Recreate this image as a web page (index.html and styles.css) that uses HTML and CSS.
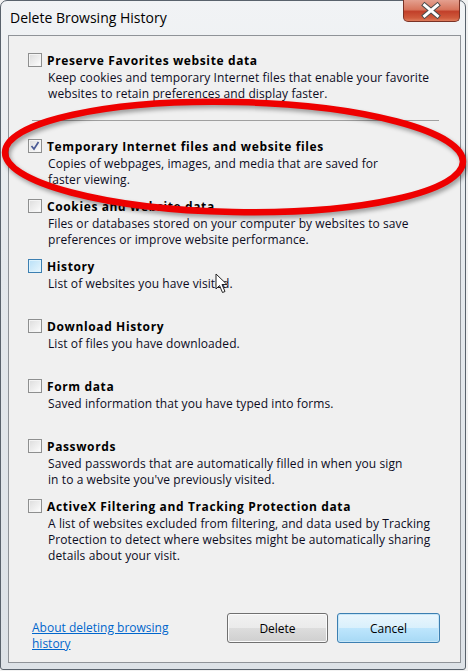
FILE: index.html
```html
<!DOCTYPE html>
<html>
<head>
<meta charset="utf-8">
<title>Delete Browsing History</title>
<link rel="stylesheet" href="styles.css">
</head>
<body>
<div class="window">
  <div class="titlebar">
    <span class="caption">Delete Browsing History</span>
    <div class="close">
      <svg width="57" height="22" viewBox="0 0 57 22">
        <path d="M22 5 L35 16 M35 5 L22 16" stroke="#4a4a4a" stroke-width="5" stroke-linecap="square" fill="none"/>
        <path d="M22 5 L35 16 M35 5 L22 16" stroke="#ffffff" stroke-width="3" stroke-linecap="square" fill="none"/>
      </svg>
    </div>
  </div>
  <div class="client">
    <div class="option">
      <span class="cb"></span>
      <div class="text">
        <div class="otitle">Preserve Favorites website data</div>
        <div class="desc">Keep cookies and temporary Internet files that enable your favorite<br>websites to retain preferences and display faster.</div>
      </div>
    </div>
    <div class="sep"></div>
    <div class="option row">
      <span class="cb checked">
        <svg width="12" height="12" viewBox="0 0 12 12"><path d="M2.5 6 L5 9 L9.5 2" stroke="#4b5b95" stroke-width="1.7" fill="none"/></svg>
      </span>
      <div class="text">
        <div class="otitle">Temporary Internet files and website files</div>
        <div class="desc">Copies of webpages, images, and media that are saved for<br>faster viewing.</div>
      </div>
    </div>
    <div class="option row">
      <span class="cb"></span>
      <div class="text">
        <div class="otitle">Cookies and website data</div>
        <div class="desc">Files or databases stored on your computer by websites to save<br>preferences or improve website performance.</div>
      </div>
    </div>
    <div class="option row">
      <span class="cb hover"></span>
      <div class="text">
        <div class="otitle">History</div>
        <div class="desc">List of websites you have visited.</div>
      </div>
    </div>
    <div class="option row">
      <span class="cb"></span>
      <div class="text">
        <div class="otitle">Download History</div>
        <div class="desc">List of files you have downloaded.</div>
      </div>
    </div>
    <div class="option row">
      <span class="cb"></span>
      <div class="text">
        <div class="otitle">Form data</div>
        <div class="desc">Saved information that you have typed into forms.</div>
      </div>
    </div>
    <div class="option row">
      <span class="cb"></span>
      <div class="text">
        <div class="otitle">Passwords</div>
        <div class="desc">Saved passwords that are automatically filled in when you sign<br>in to a website you've previously visited.</div>
      </div>
    </div>
    <div class="option row">
      <span class="cb"></span>
      <div class="text">
        <div class="otitle">ActiveX Filtering and Tracking Protection data</div>
        <div class="desc">A list of websites excluded from filtering, and data used by Tracking<br>Protection to detect where websites might be automatically sharing<br>details about your visit.</div>
      </div>
    </div>
    <div class="footer">
      <a class="help" href="#">About deleting browsing<br>history</a>
      <div class="buttons">
        <button class="btn delete">Delete</button>
        <button class="btn cancel">Cancel</button>
      </div>
    </div>
  </div>
</div>
<svg class="annotation" width="468" height="671" viewBox="0 0 468 671">
  <ellipse cx="234" cy="157" rx="229" ry="55" transform="rotate(1.2 234 157)" fill="none" stroke="#ee0000" stroke-width="6.5"/>
</svg>
<svg class="pointer" width="14" height="22" viewBox="0 0 14 22">
  <path d="M1 1 L1 16 L4.5 12.5 L7.5 19.5 L10 18.5 L7 11.5 L12 11.5 Z" fill="#ffffff" stroke="#222" stroke-width="1" stroke-linejoin="round"/>
</svg>
</body>
</html>
```
FILE: styles.css
```css
html, body {
  margin: 0;
  padding: 0;
}
body {
  width: 468px;
  height: 671px;
  background: #f2f2f2;
  overflow: hidden;
  position: relative;
  font-family: "Open Sans", "Noto Sans", sans-serif;
  font-size: 12px;
  color: #000;
}
.window {
  box-sizing: border-box;
  width: 466px;
  height: 670px;
  border: 1px solid #59626c;
  border-radius: 7px 7px 3px 3px;
  background: linear-gradient(180deg, #f1f3f5 0%, #e4e8ec 40%, #dde2e7 100%);
  display: flex;
  flex-direction: column;
}
.titlebar {
  height: 34px;
  display: flex;
  align-items: flex-start;
  padding-left: 9px;
}
.caption {
  font-size: 14px;
  line-height: 20px;
  padding-top: 7px;
  color: #000;
}
.close {
  margin-left: auto;
  margin-right: 5px;
  margin-top: -1px;
  width: 57px;
  height: 22px;
  box-sizing: border-box;
  border: 1px solid #7a3226;
  border-top: none;
  border-radius: 0 0 5px 5px;
  background: linear-gradient(180deg, #e4a08f 0%, #d7755d 45%, #c2402a 55%, #cf5a3c 85%, #de7c5c 100%);
  display: flex;
}
.close svg {
  margin-left: -1px;
}
.client {
  box-sizing: border-box;
  margin: 0 4px 0 7px;
  height: 628px;
  border: 1px solid #8f9398;
  background: #f0f0f0;
  padding: 17px 0 0 19px;
  display: flex;
  flex-direction: column;
}
.option {
  display: flex;
  align-items: flex-start;
  gap: 5px;
}
.row {
  height: 60px;
}
.cb {
  box-sizing: border-box;
  width: 14px;
  height: 14px;
  flex: none;
  margin-top: 0;
  border: 1px solid #8e8f8f;
  background: linear-gradient(135deg, #dcdcdc 0%, #f0f0f0 60%, #ffffff 100%);
  box-shadow: inset 0 0 0 1px #f4f4f4;
  display: flex;
  align-items: center;
  justify-content: center;
}
.cb.hover {
  border-color: #3c7fb1;
  background: linear-gradient(135deg, #b9e0f7 0%, #d4edfb 60%, #e8f6fe 100%);
  box-shadow: inset 0 0 0 1px #def3fd;
}
.otitle {
  font-weight: bold;
  line-height: 16px;
  letter-spacing: 0.62px;
}
.desc {
  margin-top: 1px;
  padding-left: 1px;
  line-height: 16px;
  letter-spacing: 0.09px;
  color: #0c0c1e;
}
.sep {
  margin: 18px 21px 18px 4px;
  border-top: 1px solid #a0a0a0;
}
.footer {
  margin-top: auto;
  display: flex;
  align-items: flex-start;
  padding: 0 20px 10px 4px;
}
.help {
  margin-top: 7px;
  color: #0066cc;
  text-decoration: underline;
  line-height: 16px;
}
.buttons {
  margin-left: auto;
  display: flex;
  gap: 9px;
}
.btn {
  box-sizing: border-box;
  height: 30px;
  font-family: inherit;
  font-size: 12px;
  color: #000;
  border: 1px solid #707070;
  border-radius: 3px;
  background: linear-gradient(180deg, #f2f2f2 0%, #ebebeb 49%, #dddddd 50%, #cfcfcf 100%);
  box-shadow: inset 0 0 0 1px #fbfbfb;
  padding: 0;
}
.delete {
  width: 101px;
}
.cancel {
  width: 103px;
  border-color: #3c7fb1;
  background: linear-gradient(180deg, #eaf6fd 0%, #d9f0fc 49%, #bee6fd 50%, #a7d9f5 100%);
  box-shadow: inset 0 0 0 1px #c6e6f8;
}
.annotation {
  position: absolute;
  left: 0;
  top: 0;
  pointer-events: none;
  filter: drop-shadow(2px 3px 2px rgba(0, 0, 0, 0.35));
}
.pointer {
  position: absolute;
  left: 215px;
  top: 273px;
  pointer-events: none;
}
```
